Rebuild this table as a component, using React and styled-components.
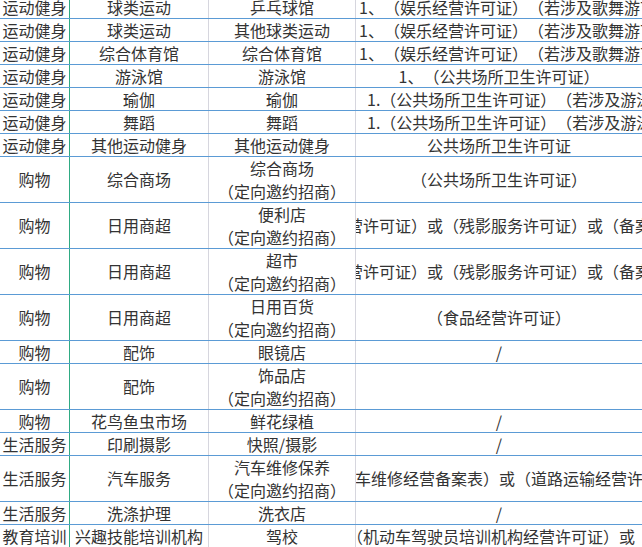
import React from 'react';
import styled, { createGlobalStyle } from 'styled-components';

const rows = [
    { a: '运动健身', b: '球类运动', c: '乒乓球馆', d: '1、（娱乐经营许可证）（若涉及歌舞游艺娱乐场所）', align: 'left', indent: 3 },
    { a: '运动健身', b: '球类运动', c: '其他球类运动', d: '1、（娱乐经营许可证）（若涉及歌舞游艺娱乐场所）', align: 'left', indent: 3 },
    { a: '运动健身', b: '综合体育馆', c: '综合体育馆', d: '1、（娱乐经营许可证）（若涉及歌舞游艺娱乐场所）', align: 'left', indent: 3 },
    { a: '运动健身', b: '游泳馆', c: '游泳馆', d: '1、（公共场所卫生许可证）' },
    { a: '运动健身', b: '瑜伽', c: '瑜伽', d: '1.（公共场所卫生许可证）（若涉及游泳场所）', align: 'left', indent: 11 },
    { a: '运动健身', b: '舞蹈', c: '舞蹈', d: '1.（公共场所卫生许可证）（若涉及游泳场所）', align: 'left', indent: 11 },
    { a: '运动健身', b: '其他运动健身', c: '其他运动健身', d: '公共场所卫生许可证' },
    { a: '购物', b: '综合商场', c: '综合商场\n（定向邀约招商）', d: '（公共场所卫生许可证）', tall: true },
    { a: '购物', b: '日用商超', c: '便利店\n（定向邀约招商）', d: '（食品经营许可证）或（残影服务许可证）或（备案登记证）', tall: true },
    { a: '购物', b: '日用商超', c: '超市\n（定向邀约招商）', d: '（食品经营许可证）或（残影服务许可证）或（备案登记证）', tall: true },
    { a: '购物', b: '日用商超', c: '日用百货\n（定向邀约招商）', d: '（食品经营许可证）', tall: true },
    { a: '购物', b: '配饰', c: '眼镜店', d: '/' },
    { a: '购物', b: '配饰', c: '饰品店\n（定向邀约招商）', d: '', tall: true },
    { a: '购物', b: '花鸟鱼虫市场', c: '鲜花绿植', d: '/' },
    { a: '生活服务', b: '印刷摄影', c: '快照/摄影', d: '/' },
    { a: '生活服务', b: '汽车服务', c: '汽车维修保养\n（定向邀约招商）', d: '（机动车维修经营备案表）或（道路运输经营许可证）', tall: true },
    { a: '生活服务', b: '洗涤护理', c: '洗衣店', d: '/' },
    { a: '教育培训', b: '兴趣技能培训机构', c: '驾校', d: '（机动车驾驶员培训机构经营许可证）或（' },
];

export default function App() {
    return (
        <>
            <GlobalStyle />
            <Sheet>
                {rows.map((r, i) => (
                    <Row key={i} $tall={r.tall}>
                        <Cell $line="green">
                            <CellText>{r.a}</CellText>
                        </Cell>
                        <Cell>
                            <CellText>{r.b}</CellText>
                        </Cell>
                        <Cell>
                            <CellText>{r.c}</CellText>
                        </Cell>
                        <Cell $line="none" $align={r.align} $indent={r.indent}>
                            <CellText>{r.d}</CellText>
                        </Cell>
                    </Row>
                ))}
            </Sheet>
        </>
    );
}

const GlobalStyle = createGlobalStyle`
    html, body {
        margin: 0;
        padding: 0;
        background: #ffffff;
        overflow: hidden;
    }
`;

const Sheet = styled.div`
    display: flex;
    flex-direction: column;
    margin-top: -4px;
    width: 643px;
    font-family: "Noto Sans CJK SC", "Noto Sans", sans-serif;
    font-size: 16px;
    color: #333333;
    text-spacing-trim: space-all;
    font-kerning: none;
`;

const Row = styled.div`
    display: grid;
    grid-template-columns: 70px 139px 147px 287px;
    height: ${({ $tall }) => ($tall ? 46 : 23)}px;
    box-sizing: border-box;
    border-bottom: 1px solid #5b9bd5;
`;

const lineColor = {
    green: '#2fab84',
    gray: '#d6d6de',
    none: 'transparent',
};

const Cell = styled.div`
    display: flex;
    align-items: center;
    justify-content: ${({ $align }) => ($align === 'left' ? 'flex-start' : 'center')};
    padding-left: ${({ $indent }) => $indent || 0}px;
    box-sizing: border-box;
    overflow: hidden;
    border-right: 1px solid ${({ $line }) => lineColor[$line || 'gray']};
`;

const CellText = styled.span`
    flex-shrink: 0;
    white-space: pre;
    text-align: center;
    line-height: 23px;
`;
